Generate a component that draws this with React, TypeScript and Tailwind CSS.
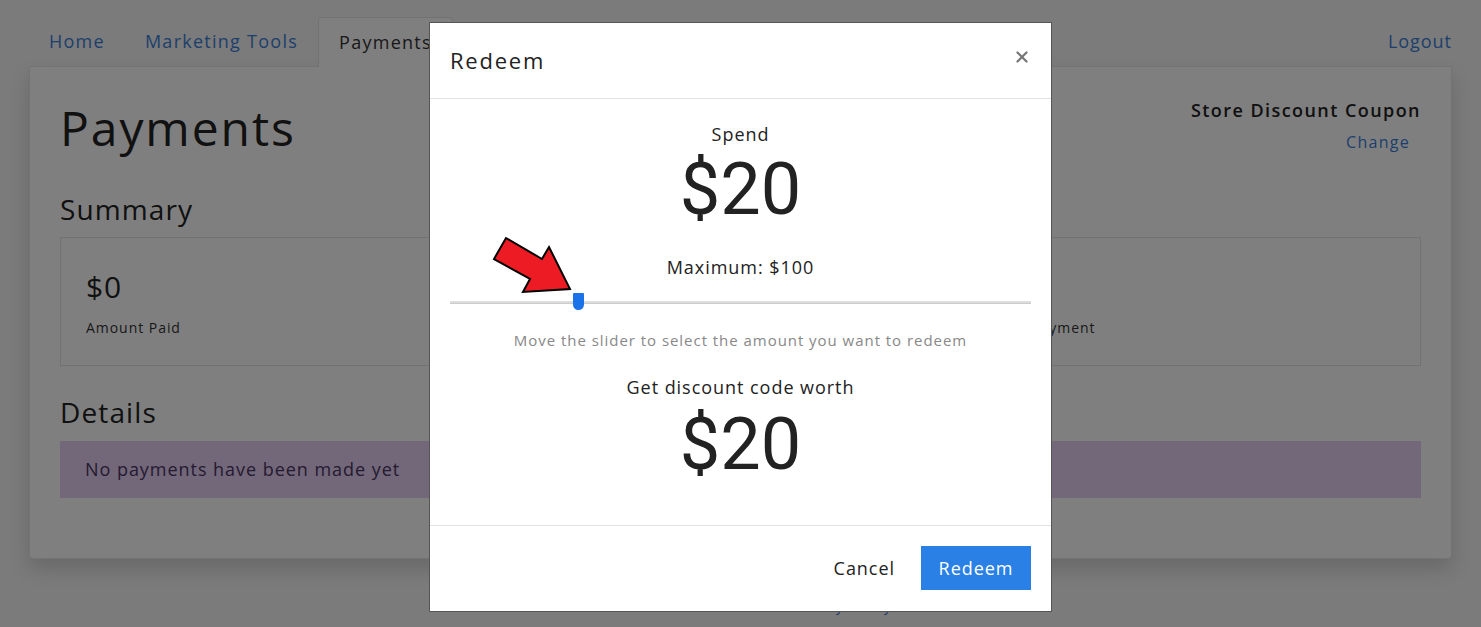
import { X } from 'lucide-react';

const font = { fontFamily: '"Open Sans", "Liberation Sans", sans-serif' };

export default function App() {
  return (
    <div className="relative h-[627px] w-full overflow-hidden bg-[#f6f6f6] tracking-[0.06em]" style={font}>
      {/* page behind the modal */}
      <div className="px-[29px] pt-[17px]">
        <div className="flex items-end justify-between">
          <div className="flex text-[18px] tracking-[0.07em]">
            <div className="px-5 h-[49px] flex items-center text-[#3b7fd8]">Home</div>
            <div className="px-5 h-[49px] flex items-center text-[#3b7fd8]">Marketing Tools</div>
            <div className="px-5 h-[50px] -mb-px flex items-center border border-b-0 border-[#e4e4e4] bg-white text-[#333] rounded-t-sm">Payments</div>
          </div>
          <div className="h-[49px] flex items-center text-[18px] text-[#3b7fd8]">Logout</div>
        </div>

        <div className="bg-white border border-[#e6e6e6] rounded-b shadow-[0_10px_20px_rgba(0,0,0,0.15)] px-[30px] pt-[30px] pb-[60px]">
          <div className="flex justify-between">
            <h1 className="text-[48px] leading-[62px] text-[#222] tracking-[0.04em]">Payments</h1>
            <div className="text-right">
              <div className="text-[18px] font-semibold text-[#222] tracking-[0.08em]">Store Discount Coupon</div>
              <div className="mt-[6px] pr-[11px] text-[16px] text-[#3b7fd8] tracking-[0.08em]">Change</div>
            </div>
          </div>

          <h2 className="mt-[29px] text-[28px] text-[#222] tracking-[0.04em]">Summary</h2>
          {/* middle column sits fully behind the modal */}
          <div className="mt-[7px] grid grid-cols-3 border border-[#e4e4e4] h-[129px]">
            <div className="px-[25px] pt-[26px]">
              <div className="text-[30px] text-[#222]">$0</div>
              <div className="mt-[8px] text-[14px] text-[#333]">Amount Paid</div>
            </div>
            <div />
            <div className="px-[25px] pt-[26px]">
              <div className="text-[30px] text-[#222]">&nbsp;</div>
              <div className="mt-[8px] text-[14px] text-[#333]">Next Payment</div>
            </div>
          </div>

          <h2 className="mt-[25px] text-[28px] text-[#222] tracking-[0.04em]">Details</h2>
          <div className="mt-[8px] h-[57px] flex items-center px-[25px] bg-[#e4d1f2] text-[#4b3565] text-[18px]">
            No payments have been made yet
          </div>
        </div>
        <div className="mt-[36px] ml-[762px] text-[14px] text-[#3b6fc0]">Privacy Policy</div>
      </div>

      {/* overlay */}
      <div className="absolute inset-0 bg-black/50">
        <div className="relative mx-auto mt-[22px] w-[623px] bg-white border border-[#555]">
          <div className="h-[76px] flex items-center justify-between pl-[20px] pr-[20px] border-b border-[#e2e2e6]">
            <div className="text-[22px] text-[#222] tracking-[0.08em]">Redeem</div>
            <X size={18} strokeWidth={3} className="text-[#777] -mt-[8px]" />
          </div>

          <div className="px-[20px] pt-[22px] pb-[40px] text-center">
            <div className="text-[18px] text-[#222]">Spend</div>
            <div className="mt-[2px] text-[72px] leading-[80px] text-[#222] tracking-normal" style={{ fontFamily: 'Roboto, sans-serif' }}>$20</div>
            <div className="mt-[24px] text-[18px] text-[#222]">Maximum: $100</div>
            <div className="relative mt-[14px] h-[16px]">
              <div className="absolute left-0 right-0 top-[6px] h-[3px] bg-[#ddd] border-b border-[#ccc]" />
              <div className="absolute left-[123px] top-[-2px] w-[11px] h-[17px] bg-[#1a73e8] rounded-b-[6px] rounded-t-[1px]" />
            </div>
            <div className="mt-[18px] text-[15px] text-[#888]">Move the slider to select the amount you want to redeem</div>
            <div className="mt-[22px] text-[18px] text-[#222]">Get discount code worth</div>
            <div className="mt-[4px] text-[72px] leading-[80px] text-[#222] tracking-normal" style={{ fontFamily: 'Roboto, sans-serif' }}>$20</div>
          </div>

          <div className="h-[86px] flex items-center justify-end gap-[26px] px-[20px] border-t border-[#e2e2e6]">
            <button className="text-[18px] text-[#222]">Cancel</button>
            <button className="w-[110px] h-[44px] bg-[#2a80e5] text-white text-[18px]">Redeem</button>
          </div>

          {/* annotation arrow */}
          <svg className="absolute left-[58px] top-[212px]" width="90" height="64" viewBox="0 0 90 64">
            <polygon
              points="18,3 54,24 61,12 82,54 35,57 42,44 6,24"
              fill="#ed1c24"
              stroke="#000"
              strokeWidth="2"
              strokeLinejoin="miter"
            />
          </svg>
        </div>
      </div>
    </div>
  );
}
